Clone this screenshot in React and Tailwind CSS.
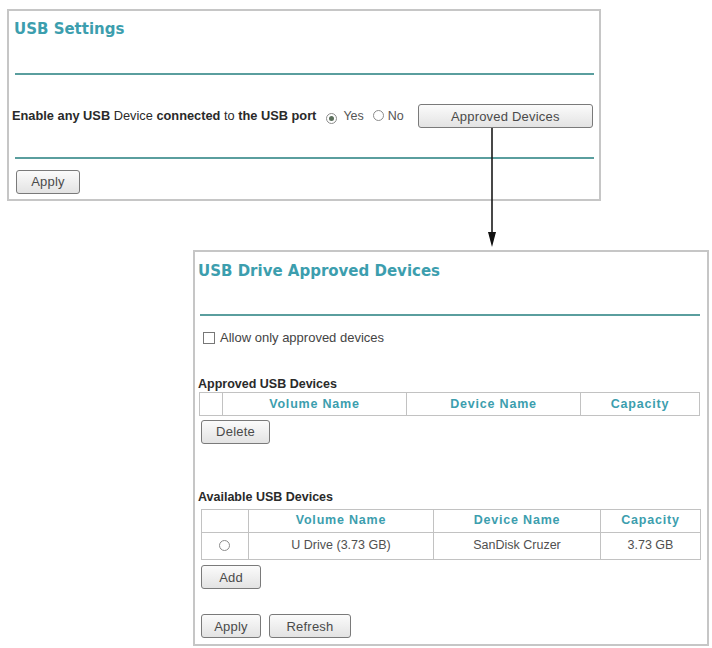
import React from "react";

function Radio({ checked }) {
  return (
    <span className="inline-flex w-[11px] h-[11px] rounded-full border border-[#8c8c8c] bg-white items-center justify-center shrink-0">
      {checked ? <span className="block w-[5px] h-[5px] rounded-full bg-[#5b6f5b]" /> : null}
    </span>
  );
}

function Btn({ w, children, className = "" }) {
  return (
    <button
      type="button"
      className={
        "h-[24px] border border-[#7a7a7a] rounded-[3px] bg-linear-to-b from-[#fbfbfb] to-[#e3e3e3] text-[#4a4a4a] text-[13px] tracking-[0.2px] leading-none shrink-0 " +
        className
      }
      style={{ width: w }}
    >
      {children}
    </button>
  );
}

const th = "border border-[#c2c2c2] p-0 text-[#3c9eae] font-bold text-[12.5px] tracking-[0.8px] text-center";
const td = "border border-[#c2c2c2] p-0 text-[#505050] text-[12.5px] text-center";

export default function App() {
  return (
    <div className="relative w-[712px] h-[648px] bg-white overflow-hidden font-['Liberation_Sans',Arial,sans-serif]">
      {/* Top panel */}
      <div className="ml-[7px] mt-[9px] w-[594px] h-[192px] border-2 border-[#c6c6c6] flex flex-col pt-[9px]">
        <div className="ml-[5px] h-[18px] leading-[18px] text-[15px] font-bold text-[#3c9eae] font-['DejaVu_Sans',sans-serif]">
          USB Settings
        </div>
        <div className="mt-[35px] ml-[6px] mr-[5px] h-[2px] bg-[#5a9e9e]" />
        <div className="mt-[29px] h-[24px] flex items-center pl-[3px]">
          <span className="text-[12.8px] text-[#2a2a2a] whitespace-nowrap">
            <b>Enable any USB</b> Device <b>connected</b> to <b>the USB port</b>
          </span>
          <span className="ml-[10px]"><Radio checked /></span>
          <span className="ml-[6px] text-[12.5px] text-[#555]">Yes</span>
          <span className="ml-[9px]"><Radio /></span>
          <span className="ml-[4px] text-[12.5px] text-[#555]">No</span>
          <Btn w={175} className="ml-[14px]">Approved Devices</Btn>
        </div>
        <div className="mt-[29px] ml-[6px] mr-[5px] h-[2px] bg-[#5a9e9e]" />
        <div className="mt-[10px] ml-[7px]">
          <Btn w={64}>Apply</Btn>
        </div>
      </div>

      {/* Connector arrow */}
      <svg className="absolute left-[486px] top-[128px]" width="12" height="122" viewBox="0 0 12 122">
        <line x1="6" y1="0" x2="6" y2="108" stroke="#1a1a1a" strokeWidth="1.6" />
        <polygon points="2,104 10,104 6,119" fill="#111" />
      </svg>

      {/* Bottom panel */}
      <div className="ml-[193px] mt-[49px] w-[516px] h-[396px] border-2 border-[#c6c6c6] flex flex-col pt-[10px]">
        <div className="ml-[3px] h-[18px] leading-[18px] text-[15px] font-bold text-[#3c9eae] font-['DejaVu_Sans',sans-serif]">
          USB Drive Approved Devices
        </div>
        <div className="mt-[34px] ml-[5px] mr-[7px] h-[2px] bg-[#5a9e9e]" />
        <div className="mt-[13px] h-[18px] flex items-center ml-[8px]">
          <span className="w-[12px] h-[12px] border border-[#777] bg-white shrink-0" />
          <span className="ml-[5px] text-[13px] text-[#444]">Allow only approved devices</span>
        </div>
        <div className="mt-[29px] ml-[3px] h-[16px] leading-[16px] text-[12.5px] font-bold text-[#2a2a2a]">
          Approved USB Devices
        </div>
        <table className="ml-[4px] w-[500px] table-fixed border-collapse">
          <colgroup>
            <col style={{ width: 23 }} />
            <col style={{ width: 184 }} />
            <col style={{ width: 174 }} />
            <col style={{ width: 119 }} />
          </colgroup>
          <thead>
            <tr className="h-[23px]">
              <th className={th}></th>
              <th className={th}>Volume Name</th>
              <th className={th}>Device Name</th>
              <th className={th}>Capacity</th>
            </tr>
          </thead>
        </table>
        <div className="mt-[3px] ml-[6px]">
          <Btn w={69}>Delete</Btn>
        </div>
        <div className="mt-[45px] ml-[3px] h-[16px] leading-[16px] text-[12.5px] font-bold text-[#2a2a2a]">
          Available USB Devices
        </div>
        <table className="mt-[4px] ml-[6px] w-[499px] table-fixed border-collapse">
          <colgroup>
            <col style={{ width: 47 }} />
            <col style={{ width: 185 }} />
            <col style={{ width: 167 }} />
            <col style={{ width: 100 }} />
          </colgroup>
          <thead>
            <tr className="h-[23px]">
              <th className={th}></th>
              <th className={th}>Volume Name</th>
              <th className={th}>Device Name</th>
              <th className={th}>Capacity</th>
            </tr>
          </thead>
          <tbody>
            <tr className="h-[27px]">
              <td className={td}>
                <span className="inline-flex align-middle -ml-[2px]"><Radio /></span>
              </td>
              <td className={td}>U Drive (3.73 GB)</td>
              <td className={td}>SanDisk Cruzer</td>
              <td className={td}>3.73 GB</td>
            </tr>
          </tbody>
        </table>
        <div className="mt-[5px] ml-[6px]">
          <Btn w={60}>Add</Btn>
        </div>
        <div className="mt-[25px] ml-[6px] flex gap-[8px]">
          <Btn w={60}>Apply</Btn>
          <Btn w={82}>Refresh</Btn>
        </div>
      </div>
    </div>
  );
}
